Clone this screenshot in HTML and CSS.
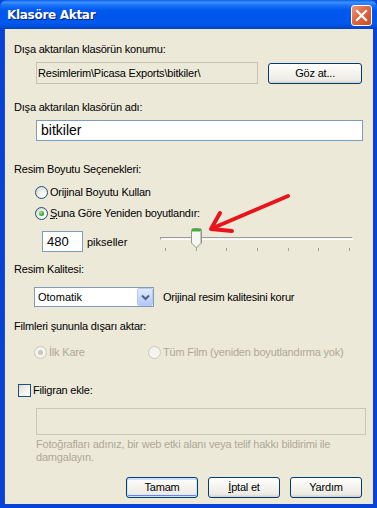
FILE: index.html
```html
<!DOCTYPE html>
<html>
<head>
<meta charset="utf-8">
<link rel="stylesheet" href="styles.css">
</head>
<body>
<div class="window">
  <div class="titlebar">
    <span class="title">Klasöre Aktar</span>
    <span class="close"><svg width="21" height="21" viewBox="0 0 21 21"><path d="M6 6 L15 15 M15 6 L6 15" stroke="#fff" stroke-width="2.2" stroke-linecap="square"/></svg></span>
  </div>
  <div class="content">
    <div class="label">Dışa aktarılan klasörün konumu:</div>
    <div class="path-row">
      <div class="readonly">Resimlerim\Picasa Exports\bitkiler\</div>
      <div class="btn browse">Göz at...</div>
    </div>
    <div class="label l2">Dışa aktarılan klasörün adı:</div>
    <div class="textbox name">bitkiler</div>
    <div class="label l3">Resim Boyutu Seçenekleri:</div>
    <div class="opt o1"><span class="radio"></span><span>Orijinal Boyutu Kullan</span></div>
    <div class="opt o2"><span class="radio checked"></span><span><u>Ş</u>una Göre Yeniden boyutlandır:</span></div>
    <div class="size-row">
      <div class="textbox num">480</div>
      <span class="unit">pikseller</span>
      <div class="slider">
        <div class="track"></div>
        <div class="ticks"><i></i><i></i><i></i><i></i><i></i><i></i><i></i></div>
        <svg class="thumb" width="11" height="21" viewBox="0 0 11 21">
          <path d="M0.5 2.5 Q0.5 0.5 2.5 0.5 L8.5 0.5 Q10.5 0.5 10.5 2.5 L10.5 15 L5.5 20 L0.5 15 Z" fill="#f7f7f4" stroke="#8c9a88"/>
          <rect x="1" y="1" width="9" height="2.5" fill="#3fb13b"/>
          <path d="M9.5 3 L9.5 15 L5.5 19" fill="none" stroke="#c9c6b6"/>
        </svg>
      </div>
    </div>
    <div class="label l4">Resim Kalitesi:</div>
    <div class="quality-row">
      <div class="select"><span>Otomatik</span><span class="drop"><svg width="9" height="7" viewBox="0 0 9 7"><path d="M1 1.5 L4.5 5 L8 1.5" fill="none" stroke="#4d6185" stroke-width="2"/></svg></span></div>
      <span class="note">Orijinal resim kalitesini korur</span>
    </div>
    <div class="label l5">Filmleri şununla dışarı aktar:</div>
    <div class="film-row">
      <div class="opt dis first"><span class="radio dchecked"></span><span>İlk Kare</span></div>
      <div class="opt dis second"><span class="radio disabled"></span><span>Tüm Film (yeniden boyutlandırma yok)</span></div>
    </div>
    <div class="check-row"><span class="checkbox"></span><span>Filigran ekle:</span></div>
    <div class="textbox disabled-box"></div>
    <div class="help">Fotoğrafları adınız, bir web etki alanı veya telif hakkı bildirimi ile<br>damgalayın.</div>
    <div class="buttons">
      <div class="btn default">Tamam</div>
      <div class="btn"><u>İ</u>ptal et</div>
      <div class="btn">Yardım</div>
    </div>
  </div>
  <svg class="arrow" width="377" height="508" viewBox="0 0 377 508">
    <path d="M288 196 L213 228" stroke="#e8141b" stroke-width="4" stroke-linecap="round" fill="none"/>
    <path d="M220 213 L211 229 L232 231" stroke="#e8141b" stroke-width="4" stroke-linecap="round" stroke-linejoin="round" fill="none"/>
  </svg>
</div>
</body>
</html>
```

FILE: styles.css
```css
* { box-sizing: border-box; }
html, body { margin: 0; padding: 0; }
body {
  width: 377px;
  height: 508px;
  overflow: hidden;
  font-family: "Liberation Sans", Arial, sans-serif;
  font-size: 11px;
  letter-spacing: -0.2px;
  color: #000;
}
.window {
  position: relative;
  width: 377px;
  height: 508px;
  background: #0842d6;
  display: flex;
  flex-direction: column;
}
.titlebar {
  height: 29px;
  flex: none;
  display: flex;
  align-items: center;
  justify-content: space-between;
  padding: 0 5px 0 7px;
  background: linear-gradient(to bottom, #0a5ee8 0%, #3d8ffb 8%, #1a74f6 18%, #0058ee 35%, #0056eb 60%, #0059ef 80%, #004ed9 92%, #003fc1 100%);
  border-radius: 7px 7px 0 0;
}
.title {
  color: #fff;
  font-family: "DejaVu Sans", sans-serif;
  font-weight: bold;
  font-size: 12px;
  letter-spacing: -0.3px;
  text-shadow: 1px 1px 0 #0a1e7a;
  margin-top: 1px;
}
.close {
  width: 21px;
  height: 21px;
  border: 1px solid #fff;
  border-radius: 3px;
  background: linear-gradient(135deg, #ee9a7a 0%, #e26a45 40%, #cc4a22 100%);
  display: flex;
  align-items: center;
  justify-content: center;
  margin-top: 1px;
}
.close svg { display: block; margin: -1px; }
.content {
  flex: 1;
  margin: 0 4px 4px 4px;
  background: #ece9d8;
  padding: 14px 11px 0 9px;
  display: flex;
  flex-direction: column;
  border-left: 1px solid #1b4fd8;
}
.label { line-height: 13px; height: 13px; white-space: nowrap; }
.path-row {
  margin-top: 6px;
  height: 22px;
  display: flex;
  align-items: center;
}
.readonly {
  margin-left: 22px;
  width: 223px;
  height: 22px;
  border: 1px solid #c4c2b6;
  background: #ece9d8;
  line-height: 20px;
  padding-left: 1px;
  white-space: nowrap;
}
.btn {
  height: 21px;
  border: 1px solid #003c74;
  border-radius: 3px;
  background: linear-gradient(to bottom, #ffffff 0%, #f6f5f0 40%, #ecebe5 85%, #d6d0c5 100%);
  display: flex;
  align-items: center;
  justify-content: center;
  line-height: 13px;
}
.browse {
  margin-left: 10px;
  width: 94px;
  margin-top: 1px;
}
.l2 { margin-top: 17px; }
.textbox {
  border: 1px solid #7f9db9;
  background: #fff;
}
.name {
  margin-top: 6px;
  margin-left: 22px;
  width: 327px;
  height: 21px;
  font-size: 14px;
  letter-spacing: 0;
  line-height: 19px;
  padding-left: 4px;
}
.l3 { margin-top: 22px; }
.opt {
  display: flex;
  align-items: center;
  height: 13px;
  line-height: 13px;
  white-space: nowrap;
}
.o1 { margin-top: 10px; margin-left: 21px; }
.o2 { margin-top: 8px; margin-left: 21px; }
.radio {
  width: 13px;
  height: 13px;
  border-radius: 50%;
  border: 1px solid #1c5180;
  background: radial-gradient(circle at 70% 75%, #ffffff 0%, #f0efe9 40%, #d6d3c6 100%);
  margin-right: 2px;
  flex: none;
  display: flex;
  align-items: center;
  justify-content: center;
}
.radio.checked::after {
  content: "";
  width: 5px;
  height: 5px;
  border-radius: 50%;
  background: radial-gradient(circle at 35% 35%, #8ee68a 0%, #22a322 70%, #1a8a1a 100%);
}
.size-row {
  margin-top: 11px;
  height: 21px;
  display: flex;
  align-items: center;
}
.num {
  margin-left: 28px;
  width: 41px;
  height: 21px;
  font-size: 13px;
  letter-spacing: 0;
  line-height: 19px;
  padding-left: 4px;
}
.unit { margin-left: 4px; letter-spacing: 0; }
.slider {
  position: relative;
  margin-left: auto;
  margin-right: 9px;
  width: 193px;
  height: 21px;
}
.track {
  margin-top: 6px;
  height: 3px;
  border-top: 1px solid #9d9c99;
  border-left: 1px solid #9d9c99;
  border-bottom: 1px solid #fff;
  border-right: 1px solid #fff;
  background: #f3f3f1;
}
.ticks {
  margin-top: 8px;
  padding: 0 3px 0 5px;
  display: flex;
  justify-content: space-between;
}
.ticks i { display: block; width: 1px; height: 3px; background: #a3a29e; }
.thumb { position: absolute; left: 31px; top: -3px; }
.l4 { margin-top: 11px; }
.quality-row {
  margin-top: 11px;
  height: 20px;
  display: flex;
  align-items: center;
}
.select {
  margin-left: 20px;
  width: 120px;
  height: 20px;
  border: 1px solid #7f9db9;
  background: #fff;
  display: flex;
  align-items: center;
  justify-content: space-between;
  padding-left: 3px;
  letter-spacing: 0;
}
.drop {
  width: 16px;
  height: 18px;
  border: 1px solid #b9c9ef;
  border-radius: 2px;
  background: linear-gradient(to bottom, #e1eaff 0%, #c5d5fb 60%, #b4c8f6 100%);
  display: flex;
  align-items: center;
  justify-content: center;
}
.note { margin-left: 9px; }
.l5 { margin-top: 13px; }
.film-row {
  margin-top: 13px;
  display: flex;
  height: 13px;
}
.dis { color: #aca899; }
.first { margin-left: 20px; width: 114px; }
.radio.disabled, .radio.dchecked {
  border-color: #cac8bb;
  background: #f4f3ee;
}
.radio.dchecked::after {
  content: "";
  width: 5px;
  height: 5px;
  border-radius: 50%;
  background: #cac8bb;
}
.check-row {
  margin-top: 25px;
  margin-left: 4px;
  height: 13px;
  display: flex;
  align-items: center;
  line-height: 13px;
}
.checkbox {
  width: 13px;
  height: 13px;
  border: 1px solid #1c5180;
  background: linear-gradient(135deg, #dcdbd4 0%, #f2f1ec 50%, #ffffff 100%);
  margin-right: 2px;
}
.disabled-box {
  margin-top: 11px;
  margin-left: 22px;
  width: 330px;
  height: 27px;
  border-color: #c9c7ba;
  background: #ece9d8;
}
.help {
  margin-top: 3px;
  margin-left: 22px;
  line-height: 13px;
  color: #aca899;
  white-space: nowrap;
}
.buttons {
  margin-top: 13px;
  display: flex;
  justify-content: flex-end;
  gap: 10px;
}
.buttons .btn { width: 72px; }
.btn.default {
  box-shadow: inset 0 0 0 1px #cee7ff, inset 0 -1px 0 1px #6982ee, inset 0 1px 0 1px #ccdcfb;
}
.arrow { position: absolute; left: 0; top: 0; pointer-events: none; }
```
